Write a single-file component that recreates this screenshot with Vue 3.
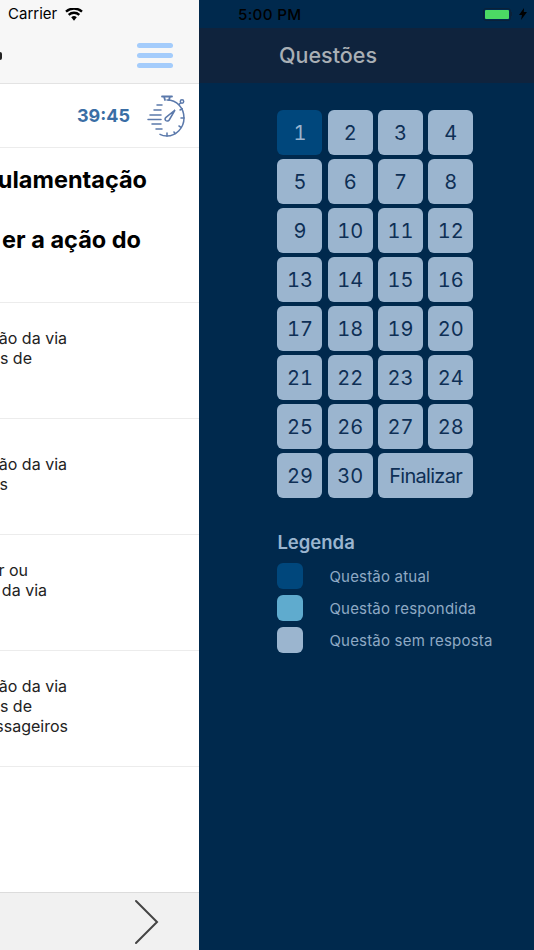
<script setup>
const question = [
  { text: 'ulamentação', end: 52 },
  { text: '', end: 0 },
  { text: 'er a ação do', end: 58 },
  { text: '', end: 0 },
]
const answers = [
  [{ text: 'ão da via', end: 132 }, { text: 's de', end: 167 }, { text: '', end: 0 }],
  [{ text: 'ão da via', end: 132 }, { text: 's', end: 191 }],
  [{ text: 'r ou', end: 171 }, { text: 'da via', end: 152 }, { text: '', end: 0 }],
  [{ text: 'ão da via', end: 132 }, { text: 's de', end: 167 }, { text: 'ssageiros', end: 131 }],
]
const numbers = Array.from({ length: 30 }, (_, i) => i + 1)
const legend = [
  { label: 'Questão atual', kind: 'current' },
  { label: 'Questão respondida', kind: 'answered' },
  { label: 'Questão sem resposta', kind: 'empty' },
]
</script>

<template>
  <div class="screen">
    <section class="left">
      <div class="bar">
        <div class="status">
          <span class="carrier">Carrier</span>
          <svg class="wifi" width="18" height="13" viewBox="0 0 18 13" fill="none" stroke="#000" stroke-width="2.400">
            <path d="M9 12.800 6.200 9.300a4.300 4.300 0 0 1 5.600 0Z" fill="#000" stroke="none" />
            <path d="M3.700 6.800a8 8 0 0 1 10.600 0" />
            <path d="M1 3.600a12.200 12.200 0 0 1 16 0" />
          </svg>
        </div>
        <div class="nav">
          <span class="clipped-dot"></span>
          <div class="burger"><i></i><i></i><i></i></div>
        </div>
      </div>
      <div class="timer">
        <span class="time">39:45</span>
        <svg class="watch" width="40" height="44" viewBox="0 0 40 44" fill="none" stroke="#5b79ab" stroke-width="1.500" stroke-linecap="round">
          <path d="M20 5C30 5 37 13 37 23S29 41 20 41c-3 0-5-.5-7-1.600" />
          <path d="M15 1.500h10M17 1.500l1 3.500M23 1.500l-1 3.500" stroke-width="1.800" />
          <circle cx="35" cy="6.500" r="1.700" />
          <path d="m32 9.500 1.500-1.500" />
          <path d="M18.700 25.500c-1-1-.7-2.200.3-3.200L28 15l-5.800 10c-.8 1.200-2.300 1.500-3.500.5Z" />
          <path d="M20 38v3M34 23h3M32 31l2 1.300M33 15l2.300-1.200M27 37l1 1.600" />
          <path d="M10 10h5M7 15h7M3 20h11M1 24.500h13M5 29h9M9 34h6" />
        </svg>
      </div>
      <div class="question">
        <div v-for="(line, i) in question" :key="i" class="q-line" :style="{ paddingRight: line.end + 'px' }">{{ line.text || '\u00a0' }}</div>
      </div>
      <div v-for="(answer, i) in answers" :key="i" class="answer">
        <div>
          <div v-for="(line, j) in answer" :key="j" class="a-line" :style="{ paddingRight: line.end + 'px' }">{{ line.text || '\u00a0' }}</div>
        </div>
      </div>
      <div class="spacer"></div>
      <footer class="footer">
        <svg width="26" height="46" viewBox="0 0 26 46" fill="none" stroke="#444" stroke-width="2" stroke-linecap="round" stroke-linejoin="miter">
          <path d="M3 2 24 23 3 44" />
        </svg>
      </footer>
    </section>

    <aside class="right">
      <div class="r-status">
        <span class="clock">5:00 PM</span>
        <div class="power">
          <div class="battery"><span></span></div>
          <i class="nub"></i>
          <svg width="8" height="12" viewBox="0 0 8 12"><path d="M5 0 0 7h3l-1 5 6-8H4.800Z" fill="#000" /></svg>
        </div>
      </div>
      <header class="r-head">Questões</header>
      <div class="grid">
        <button v-for="n in numbers" :key="n" class="cell" :class="{ current: n === 1 }">{{ n }}</button>
        <button class="cell wide">Finalizar</button>
      </div>
      <h2 class="legend-title">Legenda</h2>
      <ul class="legend">
        <li v-for="item in legend" :key="item.kind">
          <span class="swatch" :class="item.kind"></span>
          <span>{{ item.label }}</span>
        </li>
      </ul>
    </aside>
  </div>
</template>

<style>
html, body { margin: 0; background: #00294d; }
</style>

<style scoped>
.screen {
  width: 534px;
  height: 950px;
  display: flex;
  overflow: hidden;
  font-family: Inter, "Noto Sans", sans-serif;
}
.left {
  width: 199px;
  height: 950px;
  flex: none;
  display: flex;
  flex-direction: column;
  background: #fff;
  overflow: hidden;
}
.bar {
  height: 84px;
  box-sizing: border-box;
  background: #f7f7f7;
  border-bottom: 1px solid #e3e3e3;
  flex: none;
}
.status {
  height: 28px;
  display: flex;
  align-items: center;
  padding-left: 8px;
  gap: 8px;
  color: #000;
}
.carrier { font-size: 15px; line-height: 28px; }
.nav {
  height: 55px;
  display: flex;
  align-items: center;
  justify-content: space-between;
  padding-right: 26px;
}
.clipped-dot {
  width: 4px;
  height: 8px;
  margin-left: -2px;
  border-radius: 4px;
  background: #222;
}
.burger {
  width: 36px;
  display: flex;
  flex-direction: column;
  gap: 4.500px;
}
.burger i {
  display: block;
  height: 5.500px;
  border-radius: 3px;
  background: #a4ccfb;
}
.timer {
  height: 64px;
  box-sizing: border-box;
  flex: none;
  display: flex;
  align-items: center;
  justify-content: flex-end;
  padding-right: 12px;
  gap: 17px;
  border-bottom: 1px solid #ececec;
}
.time {
  font-size: 18px;
  font-weight: 700;
  color: #3a6ea5;
}
.watch { margin-top: 2px; }
.question {
  flex: none;
  height: 155px;
  padding-top: 17px;
  box-sizing: border-box;
  border-bottom: 1px solid #ececec;
}
.q-line {
  height: 30px;
  line-height: 30px;
  display: flex;
  justify-content: flex-end;
  white-space: nowrap;
  font-size: 23.500px;
  font-weight: 700;
  color: #000;
}
.answer {
  height: 116px;
  flex: none;
  box-sizing: border-box;
  padding-bottom: 5px;
  display: flex;
  flex-direction: column;
  justify-content: center;
  border-bottom: 1px solid #ececec;
}
.a-line {
  height: 20px;
  line-height: 20px;
  display: flex;
  justify-content: flex-end;
  white-space: nowrap;
  font-size: 16px;
  color: #222;
}
.spacer { flex: 1; }
.footer {
  height: 57px;
  flex: none;
  display: flex;
  align-items: center;
  justify-content: flex-end;
  padding-right: 40px;
  background: #f1f1f1;
  border-top: 1px solid #dcdcdc;
}
.right {
  flex: 1;
  height: 950px;
  background: #00294d;
}
.r-status {
  height: 28px;
  display: flex;
  align-items: center;
  justify-content: space-between;
  padding: 0 7px 0 39px;
  color: #000;
}
.clock { font-size: 15.200px; font-weight: 500; letter-spacing: 0.3px; color: #000; }
.power { display: flex; align-items: center; }
.battery {
  width: 28px;
  height: 13px;
  flex: none;
  padding: 1px;
  box-sizing: border-box;
  border: 1px solid #0b2038;
  border-radius: 3px;
  display: flex;
}
.battery span { flex: 1; background: #4cd964; border-radius: 1px; }
.nub { width: 1px; height: 4px; background: #0b2038; margin-right: 7px; }
.r-head {
  height: 55px;
  line-height: 55px;
  padding-left: 80px;
  background: #0f233d;
  color: #a9afb5;
  font-size: 21.500px;
  font-weight: 500;
}
.grid {
  margin: 27px 0 0 78.400px;
  display: grid;
  grid-template-columns: repeat(4, 45px);
  grid-auto-rows: 45px;
  column-gap: 5.300px;
  row-gap: 4px;
}
.cell {
  padding: 0;
  border: 0;
  border-radius: 6px;
  background: #9bb5cf;
  color: #0e2f55;
  font-family: inherit;
  font-size: 20px;
  font-variant-numeric: tabular-nums;
}
.cell.current { background: #00477c; color: #9bb5cf; }
.cell.wide { grid-column: span 2; letter-spacing: -0.7px; }
.legend-title {
  margin: 32px 0 0 78.400px;
  height: 24px;
  line-height: 24px;
  font-size: 18.500px;
  font-weight: 600;
  color: #9bb5cf;
}
.legend {
  list-style: none;
  margin: 9px 0 0 78.400px;
  padding: 0;
  display: flex;
  flex-direction: column;
  gap: 6px;
}
.legend li {
  height: 26px;
  display: flex;
  align-items: center;
  gap: 26px;
  font-size: 15px;
  letter-spacing: 0.2px;
  color: #8fa9c4;
}
.swatch { width: 26px; height: 26px; border-radius: 6px; flex: none; }
.swatch.current { background: #00477c; }
.swatch.answered { background: #5fabce; }
.swatch.empty { background: #9bb5cf; }
</style>
